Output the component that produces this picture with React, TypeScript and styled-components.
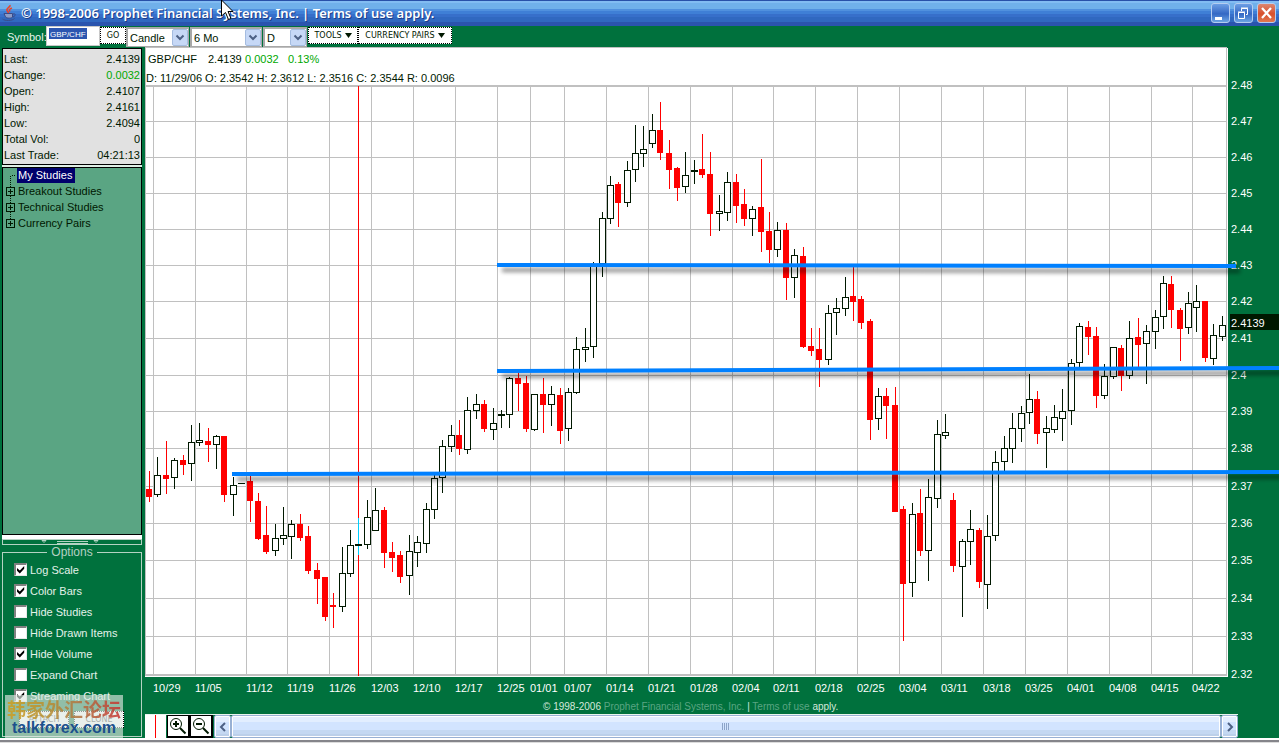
import React from "react";
import styled, { createGlobalStyle, css } from "styled-components";

const GREEN = "#00713d";
const SAGE = "#5aa583";
const INK = "#001800";
const RULE = "#c0c0c0";
const BLUE = "#0080ff";

const GlobalStyle = createGlobalStyle`
  *, *::before, *::after { box-sizing: border-box; }
  body {
    margin: 0;
    background: ${GREEN};
    color: ${INK};
    font: 11px/16px "Liberation Sans", Arial, sans-serif;
  }
  button, input, select { font: inherit; color: inherit; margin: 0; }
`;

const Window = styled.div`
  display: flex;
  flex-direction: column;
  min-height: 100vh;
  background: ${GREEN};
`;

/* ---------- title bar ---------- */

const TitleBar = styled.header`
  position: relative;
  display: flex;
  align-items: center;
  gap: 4px;
  height: 26px;
  padding: 0 3px 0 1px;
  background: linear-gradient(
    #2850a8 0 1px, #82bcf2 1px 3px, #70b0ea 3px 9px, #5090de 9px 11px,
    #3f7fd6 11px 14px, #376fca 14px 17px, #3068c0 17px 22px, #2a54ae 22px 26px
  );
`;

const WindowTitle = styled.h1`
  flex: 1;
  margin: 0;
  color: #fff;
  font: 600 13px/20px "Noto Sans", "Open Sans", sans-serif;
  text-shadow: 1px 1px 0 #1c3c88;
  white-space: nowrap;
`;

const WindowButtons = styled.div`
  display: flex;
  gap: 4px;
`;

const WindowButton = styled.button<{ $close?: boolean }>`
  width: 19px;
  height: 20px;
  padding: 0;
  border: 1px solid #b4cdf0;
  border-radius: 3px;
  background: ${(p) =>
    p.$close
      ? "linear-gradient(#dc8670, #d8502c 55%, #e07850)"
      : "linear-gradient(#6c9ee4, #3468c4 55%, #6ca4e4)"};
  svg { display: block; }
`;

const Cursor = styled.svg`
  position: absolute;
  left: 221px;
  top: 0;
  z-index: 3;
`;

/* ---------- toolbar ---------- */

const Toolbar = styled.form`
  display: flex;
  align-items: flex-start;
  height: 21px;
  padding-left: 7px;
`;

const SymbolLabel = styled.label`
  width: 39px;
  color: #e8f4ee;
  line-height: 23px;
`;

const SymbolField = styled.span`
  width: 54px;
  height: 20px;
`;

const SymbolInput = styled.input`
  display: block;
  width: 100%;
  height: 20px;
  padding: 0 3px 4px;
  border: 1px solid #c8c8c8;
  background:
    linear-gradient(#2c56b0, #2c56b0) 2px 1px / 38px 11px no-repeat, #fff;
  color: #fff;
  font-size: 8px;
  border-radius: 0;
`;

const FlatButton = styled.button<{ $width: number }>`
  display: flex;
  align-items: center;
  justify-content: center;
  gap: 3px;
  width: ${(p) => p.$width}px;
  height: 17px;
  margin-top: 1px;
  padding: 0;
  border: 1px dotted #000;
  background: #fff;
  font: 8px/12px "DejaVu Sans", Verdana, sans-serif;
  white-space: nowrap;
`;

const SelectBox = styled.span<{ $width: number }>`
  position: relative;
  width: ${(p) => p.$width}px;
  height: 20px;
  margin-right: 1px;
  margin-top: 1px;
`;

const Select = styled.select`
  appearance: none;
  display: block;
  width: 100%;
  height: 20px;
  padding: 0 18px 0 2px;
  border: 1px solid #a8a8a8;
  border-width: 2px 1px 1px 2px;
  border-radius: 0;
  background: #fff;
`;

const SelectArrow = styled.svg`
  position: absolute;
  right: 1px;
  top: 2px;
  pointer-events: none;
`;

/* ---------- main area ---------- */

const Main = styled.main`
  flex: 1;
  display: flex;
`;

const Sidebar = styled.aside`
  position: relative;
  display: flex;
  flex-direction: column;
  flex: none;
  width: 142px;
  padding: 1px 0 1px 2px;
`;

const QuoteTable = styled.table`
  width: 100%;
  border: 1px solid #000;
  border-collapse: separate;
  border-spacing: 0;
  background: #e1e1e1;
  th, td { padding: 0 1px; height: 16px; line-height: 16px; font-weight: normal; }
  th { text-align: left; }
  td { text-align: right; }
  tr:first-child th, tr:first-child td { padding-top: 2px; height: 18px; }
  tr:last-child th, tr:last-child td { padding-bottom: 1px; height: 17px; }
`;

const Up = styled.span`
  color: #00a800;
`;

const Tree = styled.ul`
  flex: 1;
  margin: 2px 0 0;
  padding: 0 0 0 3px;
  list-style: none;
  border: 1px solid #000;
  background: ${SAGE};
  box-shadow: 0 -2px 0 #dfeee6;
`;

const TreeItem = styled.li`
  display: flex;
  height: 16px;
  gap: 2px;
  svg { flex: none; }
`;

const TreeLabel = styled.span<{ $selected?: boolean }>`
  height: 15px;
  padding: 0 3px 0 1px;
  line-height: 15px;
  white-space: nowrap;
  ${(p) => p.$selected && css`
    background: #00006c;
    color: #fff;
  `}
`;

const Splitter = styled.div`
  height: 10px;
  border-top: 4px solid #fff;
  svg { display: block; width: 100%; }
`;

const Options = styled.fieldset`
  min-width: 0;
  height: 192px;
  margin: 0;
  padding: 0;
  border: 1px solid #b4d2c2;
  color: #e4f2ea;
`;

const Legend = styled.legend`
  margin: 0 auto;
  padding: 0 4px;
  color: #b4d0c2;
  font-size: 12px;
  line-height: 14px;
`;

const CheckRow = styled.label`
  display: flex;
  align-items: center;
  gap: 3px;
  height: 21px;
  margin-left: 11px;
  white-space: nowrap;
`;

const CheckBox = styled.input`
  appearance: none;
  width: 13px;
  height: 13px;
  border: 1px solid #e8e8e8;
  border-top: 2px solid #808080;
  border-left: 2px solid #808080;
  background: #fff;
  &:checked::after {
    content: "";
    display: block;
    width: 8px;
    height: 8px;
    margin: 1px;
    background: #000;
    clip-path: polygon(0 25%, 35% 55%, 90% 0, 90% 35%, 35% 95%, 0 60%);
  }
`;

const WindowActions = styled.div`
  display: flex;
  gap: 5px;
  margin: 4px 0 0 16px;
`;

const ActionButton = styled(FlatButton)`
  color: #444;
`;

const Watermark = styled.div`
  position: absolute;
  left: 5px;
  bottom: 0;
  width: 118px;
  height: 43px;
  padding-top: 4px;
  background: rgba(222, 232, 226, 0.65);
  text-align: center;
`;

const WatermarkName = styled.div`
  color: transparent;
  background: linear-gradient(90deg, #d0a020, #b89030 35%, #b07840 60%, #c83030);
  background-clip: text;
  font: bold 19px/20px "Noto Sans CJK SC", sans-serif;
  opacity: 0.85;
`;

const WatermarkSite = styled.div`
  color: #1c508c;
  font: bold 16px/18px "Liberation Sans", Arial, sans-serif;
`;

/* ---------- chart ---------- */

const ChartColumn = styled.section`
  flex: 1;
  min-width: 0;
  display: flex;
  flex-direction: column;
`;

const ChartHeader = styled.div`
  height: 37px;
  margin: 0 52px 0 3px;
  padding: 3px 0 0;
  border: 1px solid ${RULE};
  border-bottom: 0;
  background: #fff;
  box-shadow: 1px 1px 0 #fff;
  white-space: nowrap;
`;

const QuoteLine = styled.div`
  display: grid;
  grid-template-columns: 60px 37px 43px auto;
  padding-left: 2px;
  line-height: 16px;
`;

const BarLine = styled.div`
  padding-top: 3px;
  line-height: 16px;
`;

const ChartSvg = styled.svg`
  display: block;
  width: 100%;
  height: auto;
  overflow: visible;
  font: 11px "Liberation Sans", Arial, sans-serif;
`;

const Navigator = styled.div`
  display: flex;
  align-items: stretch;
  height: 24px;
  margin: 0 41px 0 3px;
  border-top: 1px solid #e8f4ee;
`;

const MiniChart = styled.svg`
  flex: none;
  margin-right: 1px;
  background: #fff;
`;

const ZoomButton = styled.button`
  width: 23px;
  padding: 0;
  border: 1px solid #000;
  border-width: 1px 2px 2px 1px;
  outline: 1px solid #000;
  outline-offset: -1px;
  background: #fff;
  svg { display: block; margin: auto; }
`;

const ScrollTrack = styled.div`
  flex: 1;
  display: flex;
  margin-left: 1px;
`;

const scrollFace = css`
  padding: 0;
  border: 1px solid #98b0d4;
  border-radius: 2px;
  box-shadow: inset 0 0 0 1px #fff;
  background: linear-gradient(#e2eeff 0 6px, #d2e4ff 6px 14px, #c4d8f2 14px 18px, #bcd0ea 18px);
`;

const ScrollArrow = styled.button`
  ${scrollFace}
  width: 17px;
  svg { display: block; margin: auto; }
`;

const ScrollThumb = styled.button`
  ${scrollFace}
  flex: 1;
  svg { display: block; margin: auto; }
`;

const StatusEdge = styled.footer`
  height: 5px;
  background: linear-gradient(#fff 0 2px, #85858a 2px 4px, #dcdcdc 4px);
`;

/* ---------- data ---------- */

type Kind = "up" | "down" | "flat";
type Candle = [x: number, high: number, low: number, top: number, bottom: number, kind: Kind];

const U = "up", D = "down", F = "flat";
const candles: Candle[] = [
  [149,471,502,489,497,D],[157,457,497,475,495,U],[166,441,494,475,479,D],[174,458,489,460,478,U],
  [183,455,475,460,465,D],[191,425,481,442,464,U],[199,423,446,440,443,U],[208,428,462,441,445,D],
  [216,435,469,436,445,U],[224,436,502,436,495,D],[233,477,516,485,495,U],[241,483,484,483,484,F],
  [250,475,522,481,501,D],[258,493,540,501,539,D],[266,506,554,535,552,D],[275,524,556,538,551,U],
  [283,507,545,535,539,U],[291,520,559,524,537,U],[300,514,541,524,538,D],[308,526,574,536,571,D],
  [317,563,604,570,579,D],[325,577,621,577,617,D],[333,593,628,605,607,D],[342,547,612,573,607,U],
  [350,530,577,545,574,U],[358,544,546,544,546,F],[367,500,549,517,545,U],[375,488,531,510,531,U],
  [384,507,568,510,553,D],[392,542,572,552,558,D],[400,551,583,555,577,D],[409,535,595,551,576,U],
  [417,536,567,542,553,U],[426,503,553,509,544,U],[434,474,519,478,510,U],[442,440,493,446,478,U],
  [451,425,452,435,447,U],[459,420,455,435,449,D],[467,397,454,410,450,U],[476,394,419,404,411,U],
  [484,400,432,404,429,D],[493,408,440,423,430,U],[501,410,428,414,416,F],[509,377,428,378,415,U],
  [518,372,411,378,384,D],[526,376,432,383,429,D],[534,394,431,394,430,U],[543,378,433,394,405,D],
  [551,386,426,394,405,U],[560,388,444,395,431,D],[568,388,441,392,429,U],[576,337,394,349,393,U],
  [585,328,362,347,350,U],[593,262,358,265,347,U],[602,212,277,218,264,U],[610,176,224,185,219,U],
  [618,182,227,184,203,D],[627,161,207,170,203,U],[635,125,182,153,170,U],[643,126,167,149,154,U],
  [652,114,148,130,144,U],[660,102,160,130,153,D],[669,140,189,153,170,D],[677,167,201,168,188,D],
  [685,152,193,175,187,U],[694,160,184,170,172,F],[702,134,178,169,175,D],[710,152,236,174,214,D],
  [719,195,231,211,214,U],[727,172,221,182,213,U],[736,174,223,182,206,D],[744,189,226,204,219,D],
  [752,206,236,209,219,U],[761,159,252,207,232,D],[769,212,263,231,250,D],[777,222,257,230,250,U],
  [786,223,300,230,278,D],[794,249,298,255,278,U],[803,247,348,256,347,D],[811,328,356,346,351,D],
  [819,328,387,349,360,D],[828,305,365,313,360,U],[836,298,335,308,313,U],[845,277,316,297,309,U],
  [853,266,321,296,302,D],[861,296,329,299,323,D],[870,319,440,321,420,D],[878,388,430,396,419,U],
  [886,388,439,396,406,D],[895,387,512,405,512,D],[903,506,641,509,584,D],[912,503,597,514,583,U],
  [920,489,556,513,551,D],[928,479,581,497,551,U],[937,420,508,434,499,U],[945,414,439,432,436,U],
  [953,493,572,500,566,D],[962,539,617,541,567,U],[970,510,565,529,542,U],[979,528,588,530,582,D],
  [987,515,609,536,585,U],[995,451,541,462,536,U],[1004,436,471,448,462,U],[1012,413,463,428,449,U],
  [1021,406,442,413,429,U],[1029,374,424,399,413,U],[1037,391,444,399,434,D],[1046,416,468,428,433,U],
  [1054,405,433,417,430,U],[1062,389,441,411,419,U],[1071,359,425,363,411,U],[1079,323,367,326,363,U],
  [1088,321,355,327,337,D],[1096,327,408,336,396,D],[1104,364,399,376,396,U],[1113,347,379,347,377,U],
  [1121,345,391,348,376,D],[1129,321,379,338,376,U],[1138,318,367,337,345,D],[1146,325,384,331,344,U],
  [1155,310,349,317,332,U],[1163,276,329,283,317,U],[1171,276,328,284,310,D],[1180,308,361,310,329,D],
  [1188,292,334,303,328,U],[1196,285,332,301,308,U],[1205,301,362,301,358,D],[1213,324,365,335,359,U],
  [1222,316,341,325,337,U],
];

const dates: [string, number][] = [
  ["10/29",153],["11/05",195],["11/12",246],["11/19",287],["11/26",329],["12/03",371],["12/10",413],
  ["12/17",455],["12/25",497],["01/01",530],["01/07",564],["01/14",606],["01/21",648],["01/28",690],
  ["02/04",732],["02/11",773],["02/18",815],["02/25",857],["03/04",899],["03/11",941],["03/18",983],
  ["03/25",1025],["04/01",1067],["04/08",1109],["04/15",1151],["04/22",1192],
];

const prices: [string, number][] = [
  ["2.48",85],["2.47",121],["2.46",157],["2.45",193],["2.44",229],["2.43",265],["2.42",301],["2.41",338],
  ["2.4",375],["2.39",411],["2.38",448],["2.37",486],["2.36",523],["2.35",560],["2.34",598],["2.33",636],
  ["2.32",674],
];

const levels = [
  { x1: 497, y1: 265, x2: 1236, y2: 266 },
  { x1: 497, y1: 371, x2: 1279, y2: 368 },
  { x1: 232, y1: 474, x2: 1279, y2: 472 },
];

const quote: [string, React.ReactNode][] = [
  ["Last:", "2.4139"],
  ["Change:", <Up key="c">0.0032</Up>],
  ["Open:", "2.4107"],
  ["High:", "2.4161"],
  ["Low:", "2.4094"],
  ["Total Vol:", "0"],
  ["Last Trade:", "04:21:13"],
];

const options: [string, boolean][] = [
  ["Log Scale", true],
  ["Color Bars", true],
  ["Hide Studies", false],
  ["Hide Drawn Items", false],
  ["Hide Volume", true],
  ["Expand Chart", false],
  ["Streaming Chart", true],
];

/* ---------- drawings ---------- */

const JavaIcon = () => (
  <svg width="16" height="18" viewBox="0 0 16 18" fill="none" aria-hidden="true">
    <path d="M9 1c1 2-4 3-3 5.500.3 1 1.300 1 1.300 2.500M11 4c-3 1-3 2-2 3.500" stroke="#e8452c" strokeWidth="1.600" />
    <path d="M3 9.500h8.500v3.500c0 1.500-6.500 1.500-7 0L3 9.500z" fill="#8c9cc8" stroke="#3a4c88" />
    <path d="M12 10c3-1 3 2 0 3M1.500 15c2 2 10 2 12-.5" stroke="#3a4c88" />
  </svg>
);

const SelectGlyph = () => (
  <SelectArrow width="16" height="17" viewBox="0 0 16 17" aria-hidden="true">
    <rect x=".5" y=".5" width="15" height="16" rx="1.500" fill="#c6d8f6" stroke="#a4bce0" />
    <path d="M4.500 6.500 8 10l3.500-3.500" fill="none" stroke="#4d6185" strokeWidth="2" />
  </SelectArrow>
);

const Triangle = () => (
  <svg width="7" height="5" aria-hidden="true"><path d="M0 0h7L3.500 5z" fill={INK} /></svg>
);

const TreeMark = ({ root, last }: { root?: boolean; last?: boolean }) => (
  <svg width="9" height="16" viewBox="0 0 9 16" shapeRendering="crispEdges" aria-hidden="true">
    {root ? (
      <path d="M8.500 7.500H4.500V16" fill="none" stroke={INK} strokeDasharray="1 1" />
    ) : (
      <>
        <path d={last ? "M4.500 0v3" : "M4.500 0v3M4.500 12v4"} stroke={INK} strokeDasharray="1 1" />
        <rect x=".5" y="3.500" width="8" height="8" fill="none" stroke={INK} />
        <path d="M2 7.500h5M4.500 5v5" stroke={INK} />
      </>
    )}
  </svg>
);

const Lens = ({ plus }: { plus?: boolean }) => (
  <svg width="18" height="18" viewBox="0 0 18 18" fill="none" stroke={INK} aria-hidden="true">
    <circle cx="7" cy="7" r="5.500" />
    <path d="M4 7h6" strokeWidth="2" />
    {plus && <path d="M7 4v6" strokeWidth="2" />}
    <path d="m11 11 5.500 5.500" strokeWidth="2" />
  </svg>
);

const Chevron = ({ right }: { right?: boolean }) => (
  <svg width="8" height="10" viewBox="0 0 8 10" fill="none" aria-hidden="true">
    <path d={right ? "M2 1l4 4-4 4" : "M6 1 2 5l4 4"} stroke="#4d6185" strokeWidth="2" />
  </svg>
);

function CandleMark({ bar }: { bar: Candle }) {
  const [x, high, low, top, bottom, kind] = bar;
  const h = bottom - top;
  if (kind === "up") {
    return (
      <g>
        <rect x={x} y={high} width={1} height={low - high} fill={INK} />
        <rect x={x - 3} y={top} width={7} height={h} fill={INK} />
        <rect x={x - 2} y={top + 1} width={5} height={Math.max(h - 2, 1)} fill="#fff" />
      </g>
    );
  }
  const fill = kind === "down" ? "#f00" : INK;
  return (
    <g fill={fill}>
      <rect x={x} y={high} width={1} height={low - high} />
      <rect x={x - 3} y={top} width={kind === "down" ? 6 : 7} height={h} />
    </g>
  );
}

function PriceChart() {
  return (
    <ChartSvg viewBox="142 84 1137 630" role="img" aria-label="GBP/CHF daily candles">
      <defs>
        <filter id="soft" filterUnits="userSpaceOnUse" x="142" y="84" width="1160" height="630">
          <feGaussianBlur stdDeviation="2" />
        </filter>
      </defs>
      <g shapeRendering="crispEdges">
        <rect x="145" y="84" width="1083" height="593" fill="#fff" />
        <rect x="145" y="84" width="1" height="592" fill={RULE} />
        <rect x="1226" y="84" width="1" height="592" fill={RULE} />
        <rect x="145" y="675" width="1082" height="1" fill={RULE} />
        <rect x="146" y="86" width="1081" height="1" fill={RULE} />
        {prices.map(([label, y]) => (
          <rect key={label} x="146" y={y} width="1081" height="1" fill={RULE} />
        ))}
        {dates.map(([label, x]) => (
          <rect key={label} x={x} y="86" width="1" height="589" fill={RULE} />
        ))}
        <rect x="358" y="86" width="1" height="590" fill="#f00" />
        {candles.map((bar) => <CandleMark key={bar[0]} bar={bar} />)}
        <rect x="358" y="518" width="1" height="26" fill="#00d0ff" />
        <rect x="358" y="546" width="1" height="9" fill="#00d0ff" />
      </g>
      <g fill="#fff">
        {prices.map(([label, y]) => <text key={label} x="1231" y={y + 4}>{label}</text>)}
        {dates.map(([label, x]) => <text key={label} x={x} y="692">{label}</text>)}
        <rect x="1230" y="314" width="49" height="16" fill={INK} />
        <text x="1231" y="327">2.4139</text>
      </g>
      {levels.map((l) => (
        <g key={l.y1} strokeWidth="4">
          <line x1={l.x1 + 5} y1={l.y1 + 5} x2={l.x2 + 4} y2={l.y2 + 5} stroke="#000" strokeOpacity=".45" filter="url(#soft)" />
          <line x1={l.x1} y1={l.y1} x2={l.x2} y2={l.y2} stroke={BLUE} />
        </g>
      ))}
      <text x="543" y="710" fontSize="10" fill={SAGE}>
        <tspan fill="#d4e8dc">© 1998-2006</tspan> Prophet Financial Systems, Inc.{" "}
        <tspan fill="#d4e8dc">|</tspan> Terms of use <tspan fill="#d4e8dc">apply.</tspan>
      </text>
    </ChartSvg>
  );
}

function Picker({ label, value, width }: { label: string; value: string; width: number }) {
  return (
    <SelectBox $width={width}>
      <Select aria-label={label} defaultValue={value}>
        <option>{value}</option>
      </Select>
      <SelectGlyph />
    </SelectBox>
  );
}

export default function App() {
  return (
    <Window>
      <GlobalStyle />
      <TitleBar>
        <JavaIcon />
        <WindowTitle>© 1998-2006 Prophet Financial Systems, Inc. | Terms of use apply.</WindowTitle>
        <WindowButtons>
          <WindowButton aria-label="Minimize">
            <svg width="17" height="18"><path d="M3 13h7v3H3z" fill="#fff" /></svg>
          </WindowButton>
          <WindowButton aria-label="Restore">
            <svg width="17" height="18" fill="none" stroke="#fff">
              <path d="M3.500 8.500h6v6h-6zM3 8h7M6.500 7V4.500h6v6H11M6 4h7" />
            </svg>
          </WindowButton>
          <WindowButton $close aria-label="Close">
            <svg width="17" height="18"><path d="m4 4 9 10M13 4 4 14" stroke="#fff" strokeWidth="2.200" /></svg>
          </WindowButton>
        </WindowButtons>
        <Cursor width="13" height="21" viewBox="0 0 13 21" aria-hidden="true">
          <path d="M.5 0v16l4-3.500 3 7 2.500-1-3-7H12z" fill="#fff" stroke="#000" />
        </Cursor>
      </TitleBar>

      <Toolbar onSubmit={(e) => e.preventDefault()}>
        <SymbolLabel htmlFor="symbol">Symbol:</SymbolLabel>
        <SymbolField>
          <SymbolInput id="symbol" defaultValue="GBP/CHF" />
        </SymbolField>
        <FlatButton $width={26} type="submit">GO</FlatButton>
        <Picker label="Chart type" value="Candle" width={63} />
        <Picker label="Range" value="6 Mo" width={72} />
        <Picker label="Interval" value="D" width={44} />
        <FlatButton $width={50} type="button">TOOLS <Triangle /></FlatButton>
        <FlatButton $width={94} type="button">CURRENCY PAIRS <Triangle /></FlatButton>
      </Toolbar>

      <Main>
        <Sidebar>
          <QuoteTable>
            <tbody>
              {quote.map(([name, value]) => (
                <tr key={name}><th scope="row">{name}</th><td>{value}</td></tr>
              ))}
            </tbody>
          </QuoteTable>
          <Tree>
            <TreeItem><TreeMark root /><TreeLabel $selected>My Studies</TreeLabel></TreeItem>
            <TreeItem><TreeMark /><TreeLabel>Breakout Studies</TreeLabel></TreeItem>
            <TreeItem><TreeMark /><TreeLabel>Technical Studies</TreeLabel></TreeItem>
            <TreeItem><TreeMark last /><TreeLabel>Currency Pairs</TreeLabel></TreeItem>
          </Tree>
          <Splitter>
            <svg height="6" viewBox="0 0 140 6" fill="none" stroke="#b4d2c2" aria-hidden="true">
              <path d="M0 .5h140M0 5.500h140M.5 0v6M139.500 0v6M55 2.500h31M55 4.500h31M40 1.500h4l-2 2zM92 1.500h4l-2 2z" />
            </svg>
          </Splitter>
          <Options>
            <Legend>Options</Legend>
            {options.map(([name, on]) => (
              <CheckRow key={name}>
                <CheckBox type="checkbox" defaultChecked={on} />
                {name}
              </CheckRow>
            ))}
            <WindowActions>
              <ActionButton $width={50} type="button">ATTACH</ActionButton>
              <ActionButton $width={50} type="button">CLONE</ActionButton>
            </WindowActions>
          </Options>
          <Watermark>
            <WatermarkName>韩家外汇论坛</WatermarkName>
            <WatermarkSite>talkforex.com</WatermarkSite>
          </Watermark>
        </Sidebar>

        <ChartColumn>
          <ChartHeader>
            <QuoteLine>
              <span>GBP/CHF</span><span>2.4139</span><Up>0.0032</Up><Up>0.13%</Up>
            </QuoteLine>
            <BarLine>D: 11/29/06 O: 2.3542 H: 2.3612 L: 2.3516 C: 2.3544 R: 0.0096</BarLine>
          </ChartHeader>
          <PriceChart />
          <Navigator>
            <MiniChart width="21" height="23" shapeRendering="crispEdges" aria-hidden="true">
              <rect x="10" width="1" height="23" fill="#f00" />
            </MiniChart>
            <ZoomButton aria-label="Zoom in"><Lens plus /></ZoomButton>
            <ZoomButton aria-label="Zoom out"><Lens /></ZoomButton>
            <ScrollTrack>
              <ScrollArrow aria-label="Scroll left"><Chevron /></ScrollArrow>
              <ScrollThumb aria-label="Scroll position">
                <svg width="8" height="7" shapeRendering="crispEdges" aria-hidden="true">
                  <path d="M.5 0v7M2.500 0v7M4.500 0v7M6.500 0v7" stroke="#8ca4c8" />
                </svg>
              </ScrollThumb>
              <ScrollArrow aria-label="Scroll right"><Chevron right /></ScrollArrow>
            </ScrollTrack>
          </Navigator>
        </ChartColumn>
      </Main>
      <StatusEdge />
    </Window>
  );
}
